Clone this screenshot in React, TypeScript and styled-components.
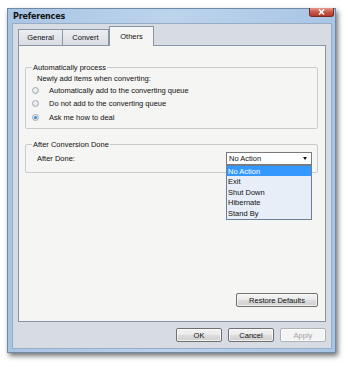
import React from "react";
import styled, { createGlobalStyle } from "styled-components";

const Global = createGlobalStyle`
  html, body { margin: 0; padding: 0; background: #ffffff; }
  body { width: 350px; height: 369px; overflow: hidden; font-family: "Liberation Sans", Arial, sans-serif; }
  #root { padding: 8px 0 0 7px; }
`;

const Window = styled.div`
  width: 329px;
  height: 345px;
  display: flex;
  flex-direction: column;
  background: linear-gradient(90deg, #a9c5e4 0%, #bcd3ec 50%, #a9c5e4 100%);
  border: 1px solid #6f8aa8;
  box-sizing: border-box;
  box-shadow: 2px 3px 5px rgba(0, 0, 0, 0.55);
  padding: 0 3px 3px 4px;
`;

const TitleBar = styled.div`
  height: 16px;
  display: flex;
  align-items: center;
  justify-content: space-between;
`;

const Title = styled.span`
  font-family: "DejaVu Sans", sans-serif;
  font-weight: bold;
  font-size: 8px;
  color: #111;
  padding-left: 1px;
  letter-spacing: -0.2px;
`;

const CloseButton = styled.div`
  width: 25px;
  height: 9px;
  margin-top: -8px;
  margin-right: -2px;
  border: 1px solid #7a2a20;
  border-top: none;
  border-radius: 0 0 3px 3px;
  background: linear-gradient(#e49a8e, #c6574a 50%, #b43a2a);
  display: flex;
  align-items: center;
  justify-content: center;
  box-sizing: border-box;
`;

const Client = styled.div`
  flex: 1;
  background: #d6dbe4;
  border: 1px solid #98acc4;
  display: flex;
  flex-direction: column;
  padding: 3px 5px 6px 5px;
`;

const Tabs = styled.div`
  display: flex;
  align-items: flex-end;
  height: 19px;
  position: relative;
  z-index: 2;
  margin-bottom: -1px;
`;

const Tab = styled.div<{ $active?: boolean; $w: number }>`
  width: ${(p) => p.$w}px;
  height: ${(p) => (p.$active ? 20 : 17)}px;
  box-sizing: border-box;
  border: 1px solid #8996a6;
  border-bottom: ${(p) => (p.$active ? "none" : "1px solid #8996a6")};
  margin-left: ${(p) => (p.$active ? "0" : "-1px")};
  background: ${(p) => (p.$active ? "#f5f5f3" : "linear-gradient(#eceef1, #d9dde3)")};
  font-size: 7.5px;
  color: #111;
  display: flex;
  align-items: center;
  justify-content: center;
  padding-bottom: ${(p) => (p.$active ? 1 : 0)}px;
  &:first-child { margin-left: 0; }
`;

const Panel = styled.div`
  height: 277px;
  box-sizing: border-box;
  border: 1px solid #8996a6;
  background: #f5f5f3;
  padding: 17px 7px 14px 6px;
  display: flex;
  flex-direction: column;
  position: relative;
  z-index: 1;
`;

const Group = styled.fieldset`
  margin: 0;
  border: 1px solid #c9cbcd;
  border-radius: 2px;
  padding: 0 0 0 11px;
  min-width: 0;
`;

const Legend = styled.legend`
  font-size: 7.5px;
  color: #111;
  padding: 0 1px;
  margin-left: -5px;
  line-height: 9px;
`;

const Label = styled.div`
  font-size: 7.5px;
  color: #111;
  height: 12px;
  display: flex;
  align-items: center;
`;

const RadioRow = styled.div`
  height: 13.3px;
  display: flex;
  align-items: center;
  gap: 10px;
  font-size: 7.5px;
  color: #111;
  margin-left: -5px;
`;

const RadioCircle = styled.span<{ $checked?: boolean }>`
  width: 7px;
  height: 7px;
  border-radius: 50%;
  box-sizing: border-box;
  border: 1px solid #a3abb4;
  background: radial-gradient(circle at 40% 35%, #f6f6f6, #d4d8dc);
  display: flex;
  align-items: center;
  justify-content: center;
  &::after {
    content: "";
    display: ${(p) => (p.$checked ? "block" : "none")};
    width: 3px;
    height: 3px;
    border-radius: 50%;
    background: #2a8fd8;
  }
`;

const ComboRow = styled.div`
  display: flex;
  align-items: center;
  justify-content: space-between;
  height: 19px;
  padding-right: 5px;
  padding-bottom: 4px;
`;

const ComboWrap = styled.div`
  position: relative;
  width: 86px;
`;

const Combo = styled.div`
  height: 13px;
  box-sizing: border-box;
  border: 1px solid #7a7a7a;
  background: #ffffff;
  display: flex;
  align-items: center;
  justify-content: space-between;
  padding: 0 4px 0 2px;
  font-size: 7.5px;
  color: #111;
`;

const Arrow = styled.span`
  width: 0;
  height: 0;
  border-left: 2.5px solid transparent;
  border-right: 2.5px solid transparent;
  border-top: 3px solid #111;
`;

const DropList = styled.div`
  position: absolute;
  top: 13px;
  left: 0;
  width: 86px;
  box-sizing: border-box;
  border: 1px solid #6b7f99;
  background: #e7eef8;
  display: flex;
  flex-direction: column;
  z-index: 5;
`;

const DropItem = styled.div<{ $sel?: boolean }>`
  height: 10.6px;
  display: flex;
  align-items: center;
  padding-left: 1px;
  font-size: 7.5px;
  color: ${(p) => (p.$sel ? "#ffffff" : "#111")};
  background: ${(p) => (p.$sel ? "#3399ff" : "transparent")};
`;

const Spacer = styled.div`
  flex: 1;
`;

const GroupGap = styled.div`
  height: 11px;
`;

const BottomPad = styled.div`
  height: 4px;
`;

const Button = styled.div<{ $w: number; $disabled?: boolean }>`
  width: ${(p) => p.$w}px;
  height: 14px;
  box-sizing: border-box;
  border: 1px solid ${(p) => (p.$disabled ? "#adb2b5" : "#707070")};
  border-radius: 2px;
  background: ${(p) => (p.$disabled ? "#f4f4f4" : "linear-gradient(#f3f3f3 0%, #ebebeb 45%, #dddddd 50%, #cfcfcf 100%)")};
  box-shadow: inset 0 0 0 1px rgba(255, 255, 255, 0.7);
  font-size: 7.5px;
  color: ${(p) => (p.$disabled ? "#a0a0a0" : "#111")};
  display: flex;
  align-items: center;
  justify-content: center;
`;

const RightRow = styled.div`
  display: flex;
  justify-content: flex-end;
`;

const ButtonBar = styled.div`
  display: flex;
  justify-content: flex-end;
  gap: 6px;
  margin-top: 6px;
`;

export default function App() {
  return (
    <>
      <Global />
      <Window>
        <TitleBar>
          <Title>Preferences</Title>
          <CloseButton>
            <svg width="7" height="6" viewBox="0 0 7 6">
              <path d="M1 0.5 L6 5.5 M6 0.5 L1 5.5" stroke="#fff" strokeWidth="1.6" />
            </svg>
          </CloseButton>
        </TitleBar>
        <Client>
          <Tabs>
            <Tab $w={45}>General</Tab>
            <Tab $w={47}>Convert</Tab>
            <Tab $w={45} $active>Others</Tab>
          </Tabs>
          <Panel>
            <Group>
              <Legend>Automatically process</Legend>
              <Label>Newly add items when converting:</Label>
              <RadioRow>
                <RadioCircle />
                Automatically add to the converting queue
              </RadioRow>
              <RadioRow>
                <RadioCircle />
                Do not add to the converting queue
              </RadioRow>
              <RadioRow>
                <RadioCircle $checked />
                Ask me how to deal
              </RadioRow>
              <BottomPad />
            </Group>
            <GroupGap />
            <Group>
              <Legend>After Conversion Done</Legend>
              <ComboRow>
                <Label>After Done:</Label>
                <ComboWrap>
                  <Combo>
                    No Action
                    <Arrow />
                  </Combo>
                  <DropList>
                    <DropItem $sel>No Action</DropItem>
                    <DropItem>Exit</DropItem>
                    <DropItem>Shut Down</DropItem>
                    <DropItem>Hibernate</DropItem>
                    <DropItem>Stand By</DropItem>
                  </DropList>
                </ComboWrap>
              </ComboRow>
            </Group>
            <Spacer />
            <RightRow>
              <Button $w={82}>Restore Defaults</Button>
            </RightRow>
          </Panel>
          <ButtonBar>
            <Button $w={46}>OK</Button>
            <Button $w={46}>Cancel</Button>
            <Button $w={46} $disabled>Apply</Button>
          </ButtonBar>
        </Client>
      </Window>
    </>
  );
}
